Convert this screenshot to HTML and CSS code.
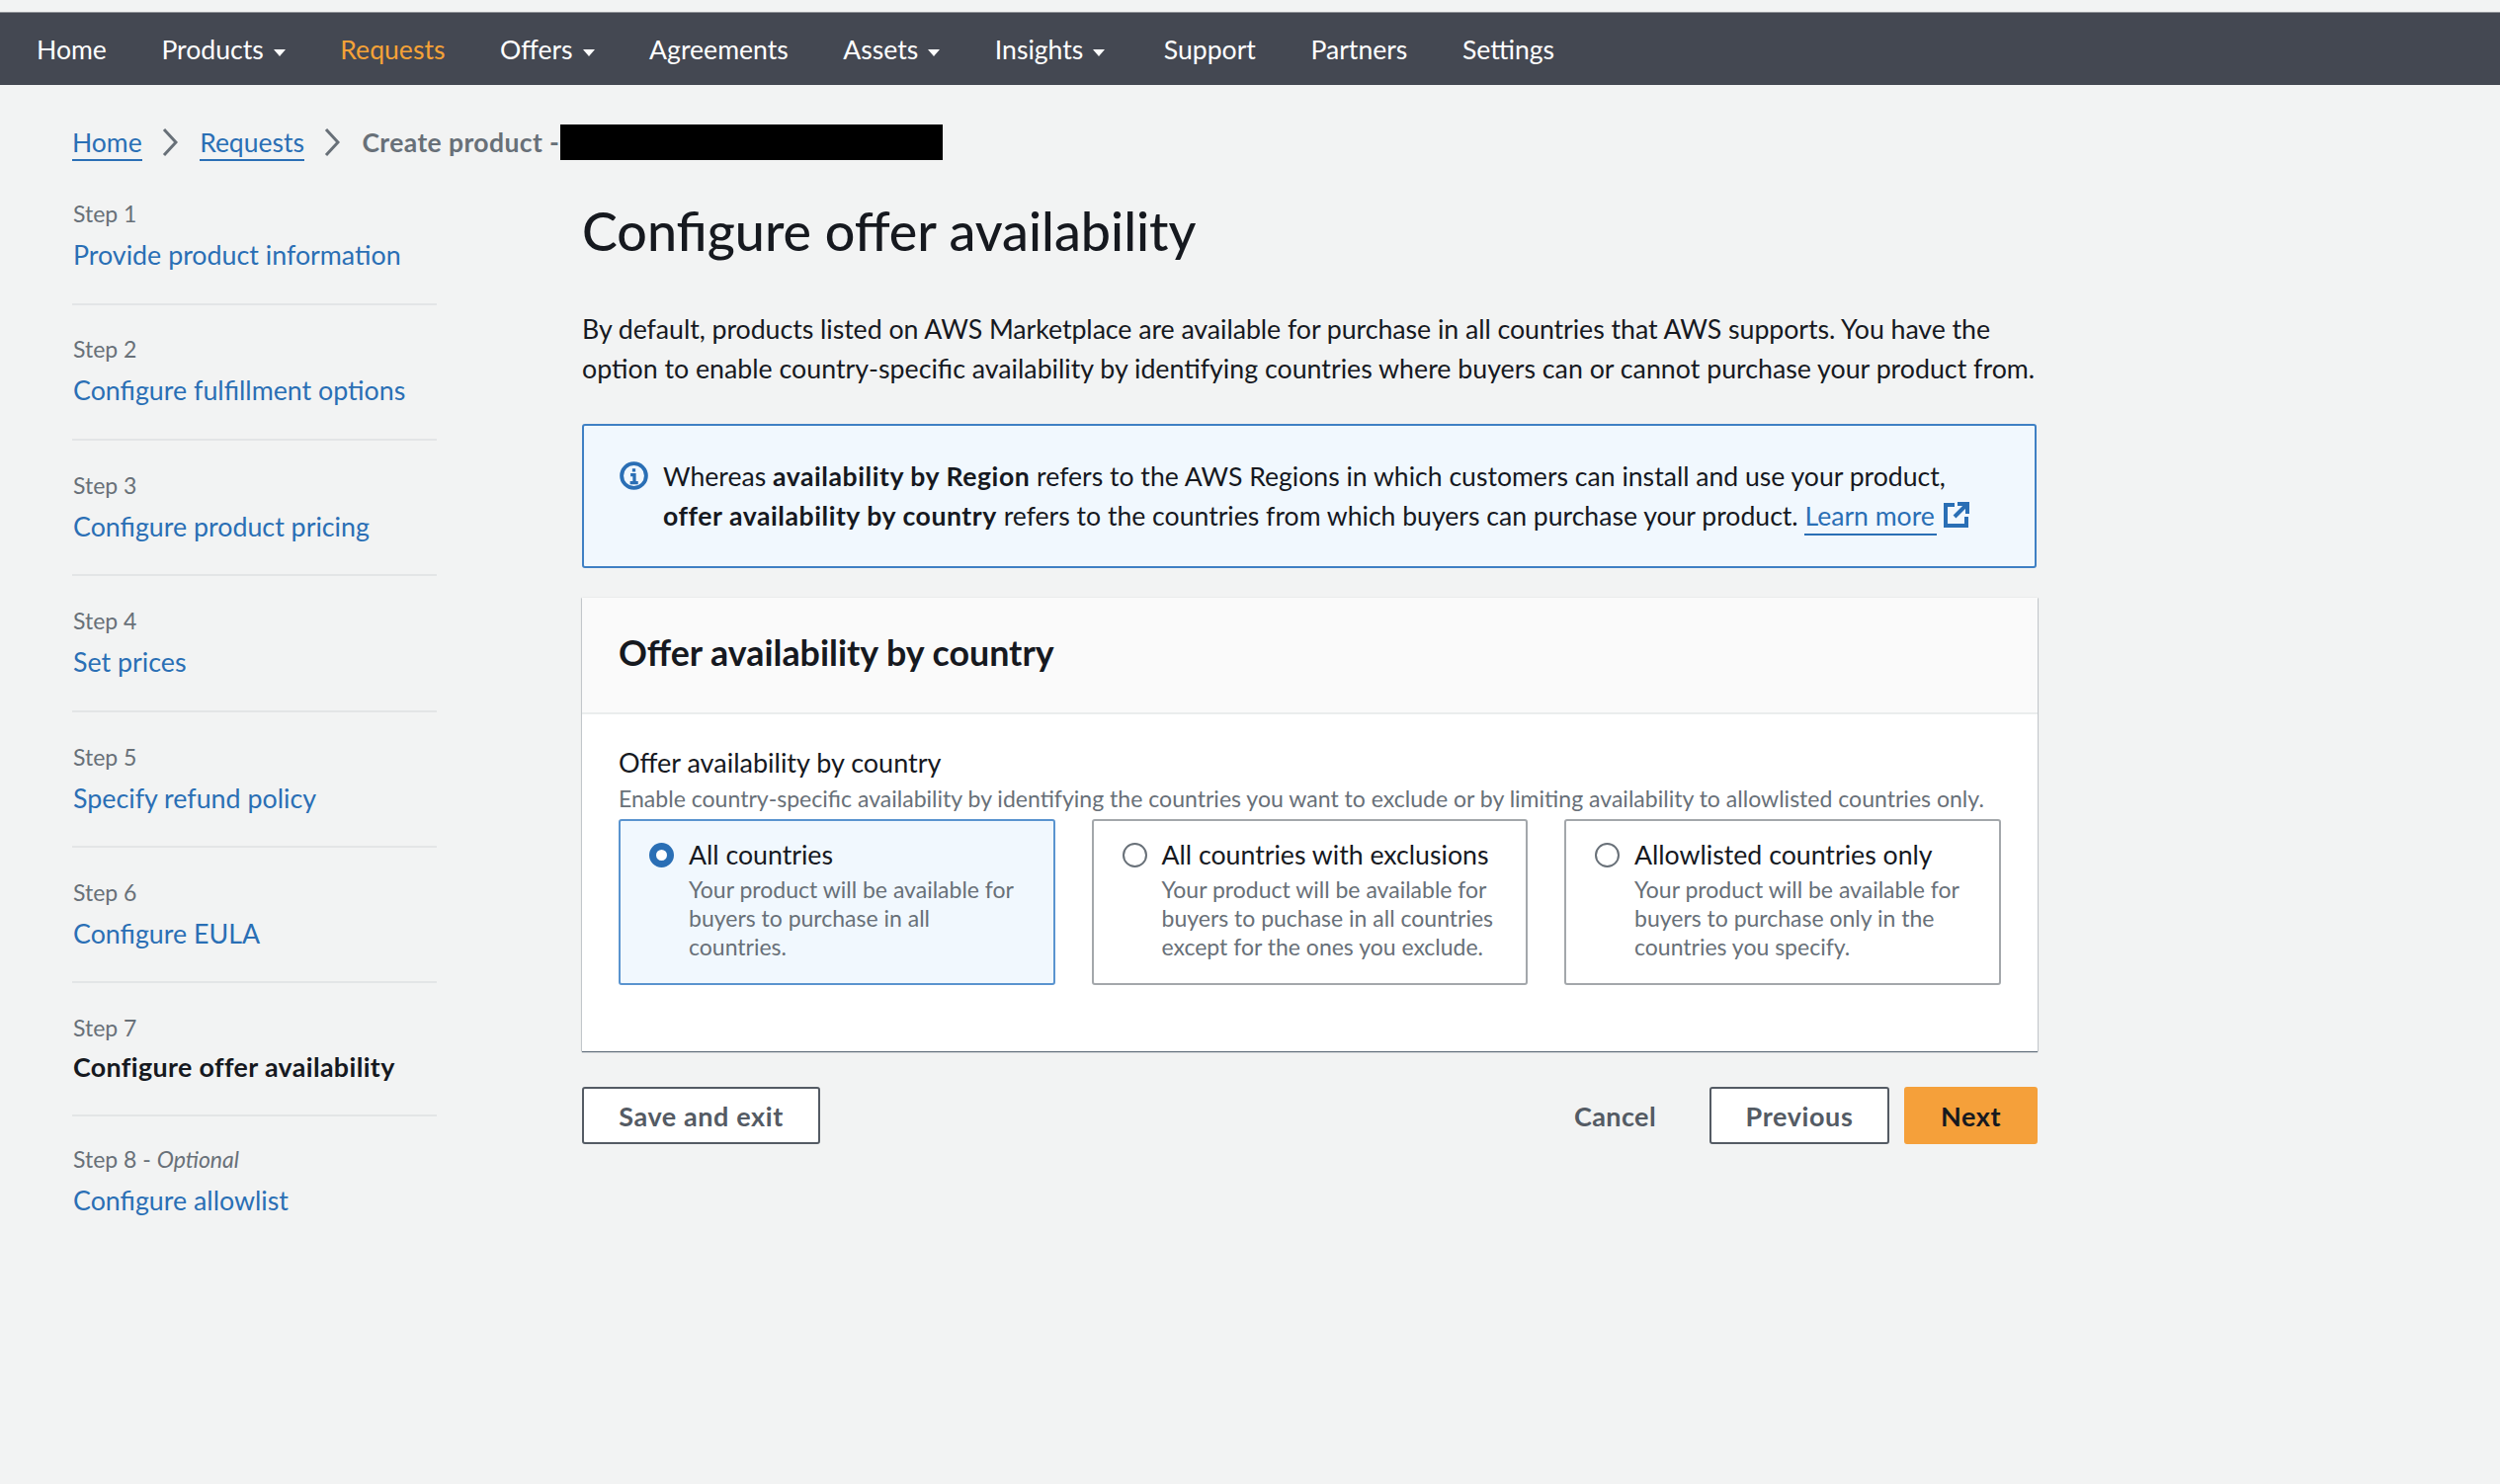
FILE: index.html
```html
<!DOCTYPE html>
<html lang="en">
<head>
    <meta charset="UTF-8">
    <title>Configure offer availability</title>
    <link rel="stylesheet" href="styles.css">
</head>
<body>
    <nav class="topnav">
        <a href="#">Home</a>
        <a href="#" class="caret">Products</a>
        <a href="#" class="current">Requests</a>
        <a href="#" class="caret">Offers</a>
        <a href="#">Agreements</a>
        <a href="#" class="caret">Assets</a>
        <a href="#" class="caret">Insights</a>
        <a href="#" class="support">Support</a>
        <a href="#">Partners</a>
        <a href="#">Settings</a>
    </nav>

    <div class="crumbs">
        <a href="#">Home</a>
        <svg class="crumb-sep" viewBox="0 0 16 30"><path d="M2 2 L14 15 L2 28"/></svg>
        <a href="#">Requests</a>
        <svg class="crumb-sep" viewBox="0 0 16 30"><path d="M2 2 L14 15 L2 28"/></svg>
        <span class="crumb-now">Create product -</span>
        <span class="redacted"></span>
    </div>

    <div class="layout">
        <ol class="steps">
            <li><small>Step 1</small><a href="#">Provide product information</a></li>
            <li><small>Step 2</small><a href="#">Configure fulfillment options</a></li>
            <li><small>Step 3</small><a href="#">Configure product pricing</a></li>
            <li><small>Step 4</small><a href="#">Set prices</a></li>
            <li><small>Step 5</small><a href="#">Specify refund policy</a></li>
            <li><small>Step 6</small><a href="#">Configure EULA</a></li>
            <li class="active"><small>Step 7</small><b>Configure offer availability</b></li>
            <li><small>Step 8 - <i>Optional</i></small><a href="#">Configure allowlist</a></li>
        </ol>

        <main class="content">
            <h1>Configure offer availability</h1>
            <p class="intro"><span class="intro-first">By default, products listed on AWS Marketplace are available for purchase in all countries that AWS supports. You have the</span> option to enable country-specific availability by identifying countries where buyers can or cannot purchase your product from.</p>

            <div class="alert">
                <svg class="alert-icon" viewBox="0 0 30 30">
                    <circle cx="15" cy="15" r="12.8"/>
                    <path class="alert-i" d="M15 7.5v3.4M11.5 14h4v8M11 22.3h8.4"/>
                </svg>
                <p>Whereas <b>availability by Region</b> refers to the AWS Regions in which customers can install and use your product, <b>offer availability by country</b> refers to the countries from which buyers can purchase your product. <a href="#" class="ext">Learn more <svg viewBox="0 0 28 28"><path d="M12 4H3v21h21v-9M15 3h10v10M25 3L12 16"/></svg></a></p>
            </div>

            <section class="card">
                <h2>Offer availability by country</h2>
                <div class="card-body">
                    <div class="field-label">Offer availability by country</div>
                    <div class="field-hint">Enable country-specific availability by identifying the countries you want to exclude or by limiting availability to allowlisted countries only.</div>
                    <div class="tiles">
                        <label class="tile selected">
                            <span class="radio"></span>
                            <span class="tile-text"><strong>All countries</strong>Your product will be available for buyers to purchase in all countries.</span>
                        </label>
                        <label class="tile">
                            <span class="radio"></span>
                            <span class="tile-text"><strong>All countries with exclusions</strong>Your product will be available for buyers to puchase in all countries except for the ones you exclude.</span>
                        </label>
                        <label class="tile">
                            <span class="radio"></span>
                            <span class="tile-text"><strong>Allowlisted countries only</strong>Your product will be available for buyers to purchase only in the countries you specify.</span>
                        </label>
                    </div>
                </div>
            </section>

            <div class="actions">
                <button class="btn">Save and exit</button>
                <button class="btn-link">Cancel</button>
                <button class="btn btn-prev">Previous</button>
                <button class="btn btn-next">Next</button>
            </div>
        </main>
    </div>
</body>
</html>
```

FILE: styles.css
```css
* {
    box-sizing: border-box;
}
html, body {
    height: 100%;
}
body {
    margin: 0;
    padding-top: 12px;
    background-color: #f2f3f3;
    color: #16191f;
    font-family: Lato, "Noto Sans", sans-serif;
    font-size: 26.8px;
    line-height: 40px;
    overflow: hidden;
}
a {
    color: #2a6fb5;
    text-decoration: none;
}
b, strong {
    font-weight: 700;
}
p b {
    letter-spacing: 0.55px;
}

.topnav {
    display: flex;
    gap: 55.5px;
    height: 74px;
    padding-left: 37px;
    align-items: center;
    background-color: #444852;
    border-top: 1px solid #8f9297;
}
.topnav a {
    color: #fff;
    font-size: 26.6px;
}
.topnav a.current {
    color: #f5a237;
}
.topnav a.support {
    margin-left: 4px;
}
.topnav a.caret::after {
    content: "";
    display: inline-block;
    margin-left: 10px;
    vertical-align: 3px;
    border-left: 6.5px solid transparent;
    border-right: 6.5px solid transparent;
    border-top: 7px solid #fff;
}

.crumbs {
    display: flex;
    align-items: center;
    height: 36px;
    margin-top: 40px;
    padding-left: 73px;
    font-size: 26.5px;
}
.crumbs a {
    border-bottom: 2px solid #2a6fb5;
    line-height: 34px;
    margin-top: 2px;
}
.crumb-sep {
    width: 16px;
    height: 30px;
    margin: 0 22px 0 20.5px;
    fill: none;
    stroke: #687078;
    stroke-width: 3;
}
.crumb-now {
    color: #687078;
    font-weight: 700;
    letter-spacing: 0.4px;
}
.redacted {
    width: 387px;
    height: 36px;
    margin-left: 1px;
    background: #000;
}

.layout {
    display: grid;
    grid-template-columns: 369px 1473px;
    column-gap: 147px;
    padding-left: 73px;
    margin-top: 38px;
}

.steps {
    list-style: none;
    margin: 0;
    padding: 0;
}
.steps li {
    padding-bottom: 28.5px;
    margin-bottom: 28.9px;
    border-bottom: 2px solid #e3e5e6;
}
.steps li:last-child {
    border-bottom: 0;
}
.steps li.active {
    padding-bottom: 27.5px;
    margin-bottom: 27.5px;
}
.steps small {
    display: block;
    padding-left: 1px;
    color: #687078;
    font-size: 23px;
    line-height: 32px;
    margin-bottom: 6px;
}
.steps li.active small {
    margin-bottom: 4px;
}
.steps a, .steps b {
    display: block;
    padding-left: 1px;
}
.steps b {
    letter-spacing: 0.37px;
}

.content h1 {
    margin: 0;
    font-size: 53.8px;
    font-weight: 500;
    line-height: 66px;
}
.intro {
    margin: 47px 0 0;
    font-size: 26.75px;
}
.intro-first {
    letter-spacing: -0.06px;
}
.alert {
    display: flex;
    gap: 15px;
    height: 146px;
    margin-top: 36px;
    padding: 31px 36px;
    width: 1472px;
    background-color: #f1f8fe;
    border: 2px solid #3f80c4;
    border-radius: 3px;
    font-size: 26.6px;
}
.alert p {
    margin: 0;
}
.alert-icon {
    flex: none;
    width: 29px;
    height: 29px;
    margin-top: 5px;
    fill: none;
    stroke: #2a6fb5;
    stroke-width: 4;
}
.alert-i {
    stroke-width: 3.4;
}
.ext {
    border-bottom: 2px solid #2a6fb5;
    padding-bottom: 2px;
}
.ext svg {
    width: 28px;
    height: 28px;
    margin: 0 -34px -3px 1px;
    fill: none;
    stroke: #2a6fb5;
    stroke-width: 4;
}

.card {
    margin-top: 30px;
    background: #fff;
    box-shadow: 0 1px 1px rgba(0, 22, 43, 0.6), 1px 0 1px rgba(0, 22, 43, 0.1), -1px 0 1px rgba(0, 22, 43, 0.1);
}
.card h2 {
    margin: 0;
    height: 118px;
    padding: 0 37px;
    background: #fafafa;
    border-bottom: 2px solid #eaeded;
    font-size: 35.8px;
    font-weight: 700;
    line-height: 112px;
}
.card-body {
    height: 341px;
    padding: 29px 37px 0;
}
.field-label {
    font-size: 27px;
    line-height: 40px;
}
.field-hint {
    color: #687078;
    font-size: 23.05px;
    line-height: 32px;
}
.tiles {
    display: grid;
    grid-template-columns: repeat(3, 441.5px);
    column-gap: 37px;
    margin-top: 5px;
}
.tile {
    display: flex;
    gap: 15px;
    height: 168px;
    padding: 16px 28px 0 29px;
    border: 2px solid #a3a7ab;
    border-radius: 3px;
    background: #fff;
}
.tile.selected {
    background-color: #f1f8fe;
    border-color: #5a94cf;
}
.radio {
    flex: none;
    width: 25px;
    height: 25px;
    margin-top: 6px;
    background: #fff;
    border: 2px solid #687078;
    border-radius: 50%;
}
.selected .radio {
    border: 7.5px solid #2a6fb5;
}
.tile-text {
    color: #687078;
    font-size: 23px;
    line-height: 29px;
}
.tile-text strong {
    display: block;
    color: #16191f;
    font-size: 26.7px;
    font-weight: 400;
    line-height: 36px;
    margin-bottom: 3px;
}

.actions {
    display: flex;
    align-items: center;
    margin-top: 36px;
    height: 58px;
}
.btn {
    height: 58px;
    width: 241px;
    padding: 0;
    background: #fff;
    border: 2px solid #545b64;
    border-radius: 3px;
    color: #545b64;
    font-family: inherit;
    font-size: 27px;
    font-weight: 700;
    letter-spacing: 0.6px;
}
.btn-link {
    margin-left: auto;
    margin-right: 54px;
    padding: 0;
    background: none;
    border: 0;
    color: #545b64;
    font-family: inherit;
    font-size: 27px;
    font-weight: 700;
    letter-spacing: 0.4px;
}
.btn-prev {
    width: 182px;
}
.btn-next {
    width: 135px;
    margin-left: 15px;
    background: #f5a03a;
    border-color: #f5a03a;
    color: #16191f;
}
```
